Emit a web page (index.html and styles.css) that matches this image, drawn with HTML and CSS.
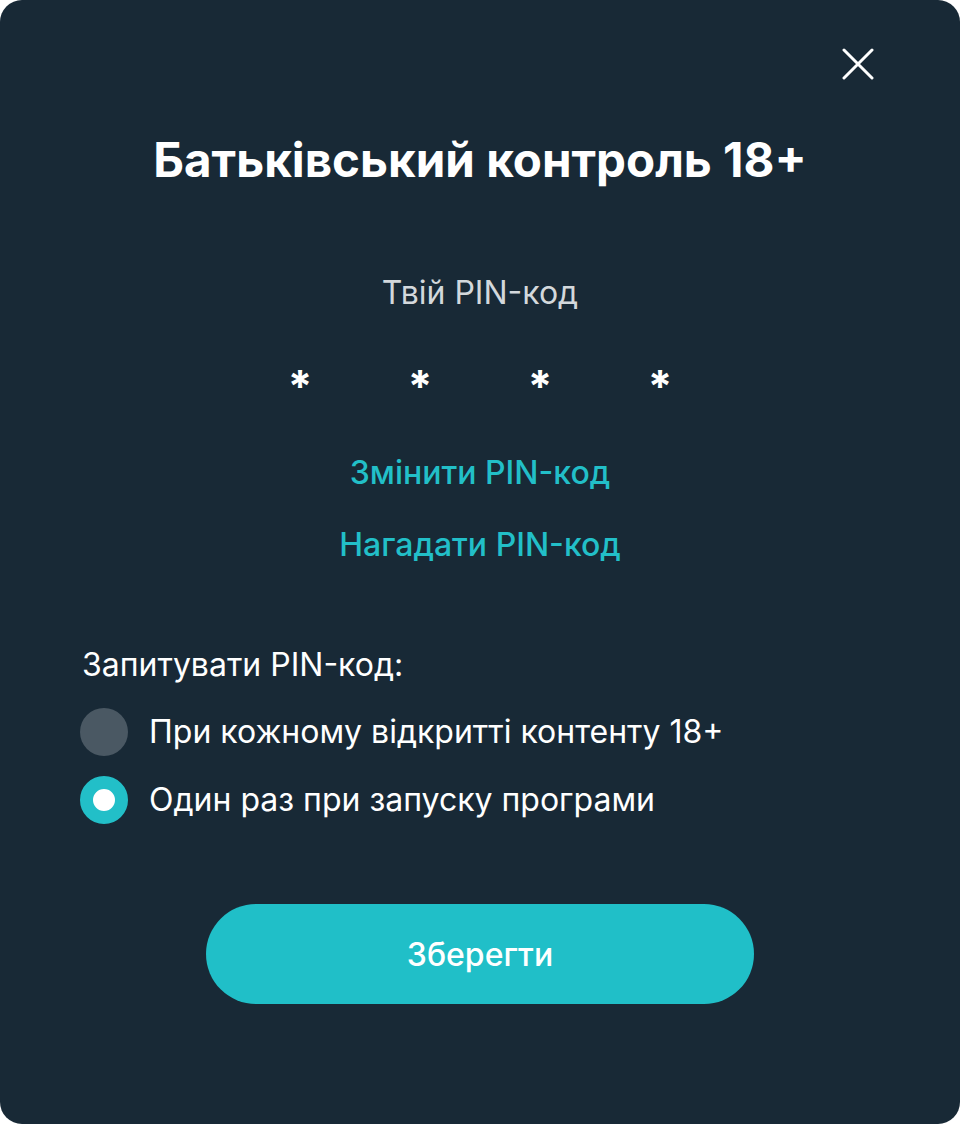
FILE: index.html
```html
<!DOCTYPE html>
<html lang="uk">
<head>
<meta charset="utf-8">
<link rel="stylesheet" href="styles.css">
</head>
<body>
<div class="dialog">
  <button class="close" aria-label="Закрити">
    <svg width="32" height="32" viewBox="0 0 32 32"><path d="M2 2L30 30M30 2L2 30" stroke="#fff" stroke-width="3" stroke-linecap="round"/></svg>
  </button>
  <h1 class="title">Батьківський контроль 18+</h1>
  <div class="pin-label">Твій PIN-код</div>
  <div class="pin">
    <span>*</span><span>*</span><span>*</span><span>*</span>
  </div>
  <a class="link link-change">Змінити PIN-код</a>
  <a class="link link-remind">Нагадати PIN-код</a>
  <div class="ask">
    <div class="ask-title">Запитувати PIN-код:</div>
    <div class="option"><span class="radio"></span><span>При кожному відкритті контенту 18+</span></div>
    <div class="option"><span class="radio checked"></span><span>Один раз при запуску програми</span></div>
  </div>
  <button class="save">Зберегти</button>
</div>
</body>
</html>
```
FILE: styles.css
```css
html, body {
  margin: 0;
  padding: 0;
  background: #ffffff;
}
body {
  font-family: Inter, "Noto Sans", sans-serif;
  width: 960px;
  height: 1124px;
}
.dialog {
  width: 960px;
  height: 1124px;
  background: #182936;
  border-radius: 22px;
  position: relative;
  display: flex;
  flex-direction: column;
  align-items: center;
  box-sizing: border-box;
  padding-top: 130px;
}
.close {
  position: absolute;
  top: 48px;
  right: 86px;
  width: 32px;
  height: 32px;
  padding: 0;
  border: 0;
  background: none;
}
.close svg { display: block; }
.title {
  margin: 0;
  font-size: 47.5px;
  font-weight: 700;
  color: #ffffff;
  line-height: 60px;
}
.pin-label {
  margin-top: 83px;
  font-size: 32px;
  color: #d3d8dc;
  line-height: 40px;
}
.pin {
  margin-top: 51px;
  display: flex;
  gap: 90px;
  color: #ffffff;
  font-size: 44px;
  font-weight: 700;
  line-height: 44px;
}
.pin span { width: 30px; text-align: center; }
.link {
  color: #22bfc8;
  font-size: 32px;
  font-weight: 500;
  line-height: 40px;
}
.link-change { margin-top: 45px; }
.link-remind { margin-top: 32px; }
.ask {
  align-self: stretch;
  margin-top: 80px;
  padding-left: 80px;
  display: flex;
  flex-direction: column;
  gap: 20px;
  color: #ffffff;
  font-size: 32px;
  line-height: 40px;
}
.ask-title { margin-left: 2px; margin-bottom: 3px; }
.option {
  display: flex;
  align-items: center;
  gap: 21px;
  height: 48px;
}
.radio {
  width: 48px;
  height: 48px;
  border-radius: 50%;
  background: #4a5863;
  box-sizing: border-box;
  flex: none;
}
.radio.checked {
  background: #ffffff;
  border: 13px solid #22bfc8;
}
.save {
  margin-top: 80px;
  width: 548px;
  height: 100px;
  border: 0;
  border-radius: 50px;
  background: #20bfc8;
  color: #ffffff;
  font-family: Inter, "Noto Sans", sans-serif;
  font-size: 32px;
  font-weight: 500;
}
```
